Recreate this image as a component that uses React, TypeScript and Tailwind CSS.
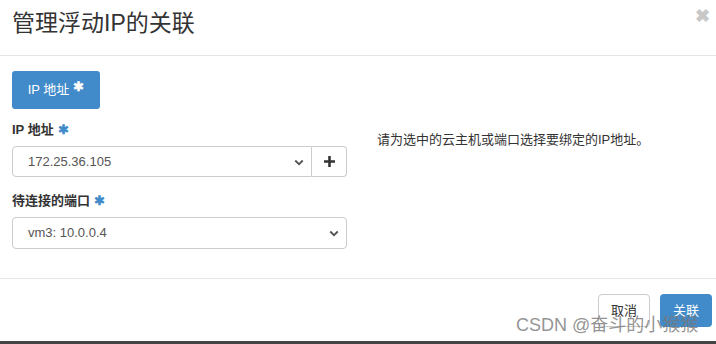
import React from "react";

const font = { fontFamily: '"Liberation Sans", "Noto Sans CJK SC", sans-serif' };

function Star() {
  return <span className="text-[#428bca] text-[13px] font-bold ml-1 align-top">✱</span>;
}

function Chevron() {
  return (
    <svg viewBox="0 0 16 16" className="w-[12px] h-[12px] text-[#555]" fill="none" stroke="currentColor" strokeWidth="2.4">
      <path d="M3 6l5 5 5-5" />
    </svg>
  );
}

export default function App() {
  return (
    <div className="w-[716px] h-[344px] bg-white flex flex-col overflow-hidden relative text-[#333]" style={font}>
      {/* Header */}
      <div className="h-[56px] shrink-0 border-b border-[#e5e5e5] pl-[12px] pr-[6px] flex items-start justify-between">
        <h1 className="text-[23px] leading-none mt-[12px] text-[#333]">管理浮动IP的关联</h1>
        <span className="text-[#c8c8c8] text-[18px] font-bold leading-none mt-[7px]">✖</span>
      </div>

      {/* Body */}
      <div className="flex-1 px-[12px] pt-[15px]">
        <div className="w-[88px] h-[38px] rounded-[3px] bg-[#428bca] text-white text-[13px] flex items-center justify-center">
          IP 地址<span className="text-[13px] font-bold ml-1 -mt-[6px]">✱</span>
        </div>

        <div className="flex mt-[13px]">
          <div className="w-[335px]">
            <div className="text-[13px] font-bold leading-[16px] text-[#333]">
              IP 地址<Star />
            </div>
            <div className="flex mt-[8px] h-[31px]">
              <div className="flex-1 border border-[#ccc] rounded-l-[4px] flex items-center justify-between pl-[15px] pr-[6px] text-[13px] text-[#555]">
                <span>172.25.36.105</span>
                <Chevron />
              </div>
              <div className="w-[35px] border border-l-0 border-[#ccc] rounded-r-[4px] flex items-center justify-center">
                <svg viewBox="0 0 12 12" className="w-[11px] h-[11px]" fill="#333">
                  <path d="M4.6 0h2.8v4.6H12v2.8H7.4V12H4.6V7.4H0V4.6h4.6z" />
                </svg>
              </div>
            </div>

            <div className="text-[13px] font-bold leading-[16px] text-[#333] mt-[16px]">
              待连接的端口<Star />
            </div>
            <div className="mt-[8px] h-[32px] border border-[#ccc] rounded-[4px] flex items-center justify-between pl-[15px] pr-[6px] text-[13px] text-[#555]">
              <span>vm3: 10.0.0.4</span>
              <Chevron />
            </div>
          </div>

          <div className="ml-[30px] mt-[8px] text-[13px] text-[#333]">请为选中的云主机或端口选择要绑定的IP地址。</div>
        </div>
      </div>

      {/* Footer */}
      <div className="h-[63px] shrink-0 border-t border-[#e5e5e5] flex justify-end items-start pt-[15px] pr-[4px] gap-[10px]">
        <div className="w-[52px] h-[33px] rounded-[4px] border border-[#ccc] bg-white text-[13px] text-[#333] flex items-center justify-center">
          取消
        </div>
        <div className="w-[52px] h-[33px] rounded-[4px] bg-[#428bca] text-[13px] text-white flex items-center justify-center">
          关联
        </div>
      </div>

      {/* Watermark */}
      <div className="absolute left-[516px] top-[316px] text-[18px] text-[#777]/80 leading-none whitespace-nowrap">
        CSDN @奋斗的小猴猴
      </div>

      {/* Bottom dark edge */}
      <div className="h-[3px] shrink-0 bg-[#444]" />
    </div>
  );
}
